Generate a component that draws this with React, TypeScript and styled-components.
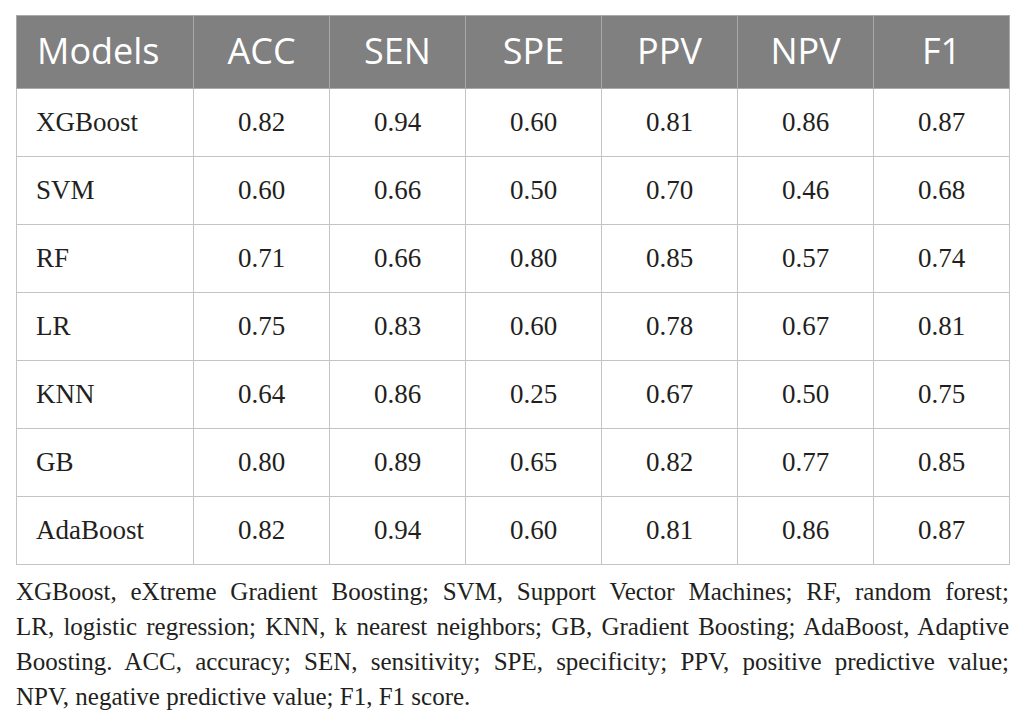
import React from 'react';
import styled, { createGlobalStyle } from 'styled-components';

const GlobalStyle = createGlobalStyle`
  html, body {
    margin: 0;
    padding: 0;
    background: #ffffff;
  }
`;

const Page = styled.div`
  padding: 15px 17px 0 16px;
  width: 993px;
`;

const Table = styled.table`
  border-collapse: collapse;
  table-layout: fixed;
  width: 993px;
`;

const HeadCell = styled.th<{ $left?: boolean }>`
  height: 68px;
  padding: 0 0 4px ${(p) => (p.$left ? '20px' : '0')};
  background: #808080;
  color: #ffffff;
  border: 1px solid #a9a9a9;
  font-family: 'Open Sans', 'Liberation Sans', sans-serif;
  font-weight: 400;
  font-size: 36px;
  text-align: ${(p) => (p.$left ? 'left' : 'center')};
  vertical-align: middle;
`;

const Cell = styled.td<{ $left?: boolean }>`
  height: 67px;
  padding: 0 0 0 ${(p) => (p.$left ? '19px' : '0')};
  border: 1px solid #c4c4c4;
  color: #231f20;
  font-family: 'Liberation Serif', 'Times New Roman', serif;
  font-size: 27px;
  text-align: ${(p) => (p.$left ? 'left' : 'center')};
  vertical-align: middle;
`;

const Note = styled.div`
  margin-top: 9px;
  color: #231f20;
  font-family: 'Liberation Serif', 'Times New Roman', serif;
  font-size: 25px;
  line-height: 35px;
`;

const NoteLine = styled.span<{ $last?: boolean }>`
  display: block;
  text-align: justify;
  text-align-last: ${(p) => (p.$last ? 'left' : 'justify')};
`;

const columns = ['Models', 'ACC', 'SEN', 'SPE', 'PPV', 'NPV', 'F1'];

const rows: [string, string[]][] = [
  ['XGBoost', ['0.82', '0.94', '0.60', '0.81', '0.86', '0.87']],
  ['SVM', ['0.60', '0.66', '0.50', '0.70', '0.46', '0.68']],
  ['RF', ['0.71', '0.66', '0.80', '0.85', '0.57', '0.74']],
  ['LR', ['0.75', '0.83', '0.60', '0.78', '0.67', '0.81']],
  ['KNN', ['0.64', '0.86', '0.25', '0.67', '0.50', '0.75']],
  ['GB', ['0.80', '0.89', '0.65', '0.82', '0.77', '0.85']],
  ['AdaBoost', ['0.82', '0.94', '0.60', '0.81', '0.86', '0.87']],
];

const noteLines = [
  'XGBoost, eXtreme Gradient Boosting; SVM, Support Vector Machines; RF, random forest;',
  'LR, logistic regression; KNN, k nearest neighbors; GB, Gradient Boosting; AdaBoost, Adaptive',
  'Boosting. ACC, accuracy; SEN, sensitivity; SPE, specificity; PPV, positive predictive value;',
  'NPV, negative predictive value; F1, F1 score.',
];

const App = () => {
  return (
    <Page>
      <GlobalStyle />
      <Table>
        <colgroup>
          <col style={{ width: 177 }} />
          {columns.slice(1).map((c) => (
            <col key={c} style={{ width: 136 }} />
          ))}
        </colgroup>
        <thead>
          <tr>
            {columns.map((c, i) => (
              <HeadCell key={c} $left={i === 0}>
                {c}
              </HeadCell>
            ))}
          </tr>
        </thead>
        <tbody>
          {rows.map(([model, values]) => (
            <tr key={model}>
              <Cell $left>{model}</Cell>
              {values.map((v, i) => (
                <Cell key={i}>{v}</Cell>
              ))}
            </tr>
          ))}
        </tbody>
      </Table>
      <Note>
        {noteLines.map((line, i) => (
          <NoteLine key={i} $last={i === noteLines.length - 1}>
            {line}
          </NoteLine>
        ))}
      </Note>
    </Page>
  );
};

export default App;
